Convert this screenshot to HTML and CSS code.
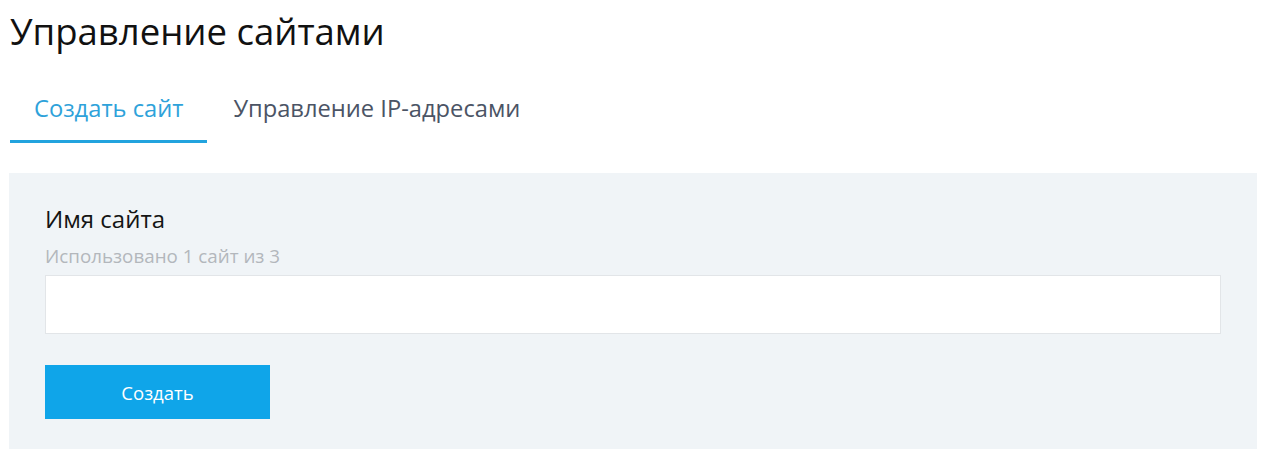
FILE: index.html
```html
<!DOCTYPE html>
<html lang="ru">
<head>
<meta charset="utf-8">
<title>Управление сайтами</title>
<link rel="stylesheet" href="styles.css">
</head>
<body>
<div class="page">
  <h1 class="title">Управление сайтами</h1>
  <nav class="tabs">
    <a class="tab tab-active">Создать сайт</a>
    <a class="tab">Управление IP-адресами</a>
  </nav>
  <section class="panel">
    <div class="field-label">Имя сайта</div>
    <div class="field-hint">Использовано 1 сайт из 3</div>
    <input class="field-input" type="text">
    <button class="btn-primary" type="button">Создать</button>
  </section>
</div>
</body>
</html>
```
FILE: styles.css
```css
* { box-sizing: border-box; }
html, body { margin: 0; padding: 0; background: #ffffff; }
body { font-family: "Open Sans", "Noto Sans", sans-serif; color: #111; }
.page { padding: 7px 12px 0 9px; }
.title {
  margin: 0 0 0 1px;
  font-size: 36.5px;
  line-height: 48px;
  font-weight: 400;
  color: #111;
}
.tabs {
  display: flex;
  gap: 2px;
  margin-top: 37px;
  padding-left: 1px;
}
.tab {
  display: block;
  padding: 0 24px;
  font-size: 23.7px;
  line-height: 32px;
  height: 51px;
  color: #4b5465;
  border-bottom: 3px solid transparent;
}
.tab-active {
  color: #2ea2da;
  border-bottom-color: #22a3de;
}
.panel {
  margin-top: 30px;
  background: #f0f4f7;
  padding: 32px 36px 30px 36px;
  display: flex;
  flex-direction: column;
  align-items: flex-start;
}
.field-label {
  font-size: 24px;
  line-height: 28px;
  color: #141414;
}
.field-hint {
  margin-top: 11px;
  font-size: 18.8px;
  line-height: 24px;
  color: #b3b7bc;
}
.field-input {
  margin-top: 7px;
  width: 100%;
  height: 59px;
  border: 1px solid #e2e5e8;
  background: #fff;
  outline: none;
}
.btn-primary {
  margin-top: 31px;
  width: 225px;
  height: 54px;
  border: 0;
  background: #0fa5e9;
  color: #fff;
  font-family: inherit;
  font-size: 18.5px;
}
```
